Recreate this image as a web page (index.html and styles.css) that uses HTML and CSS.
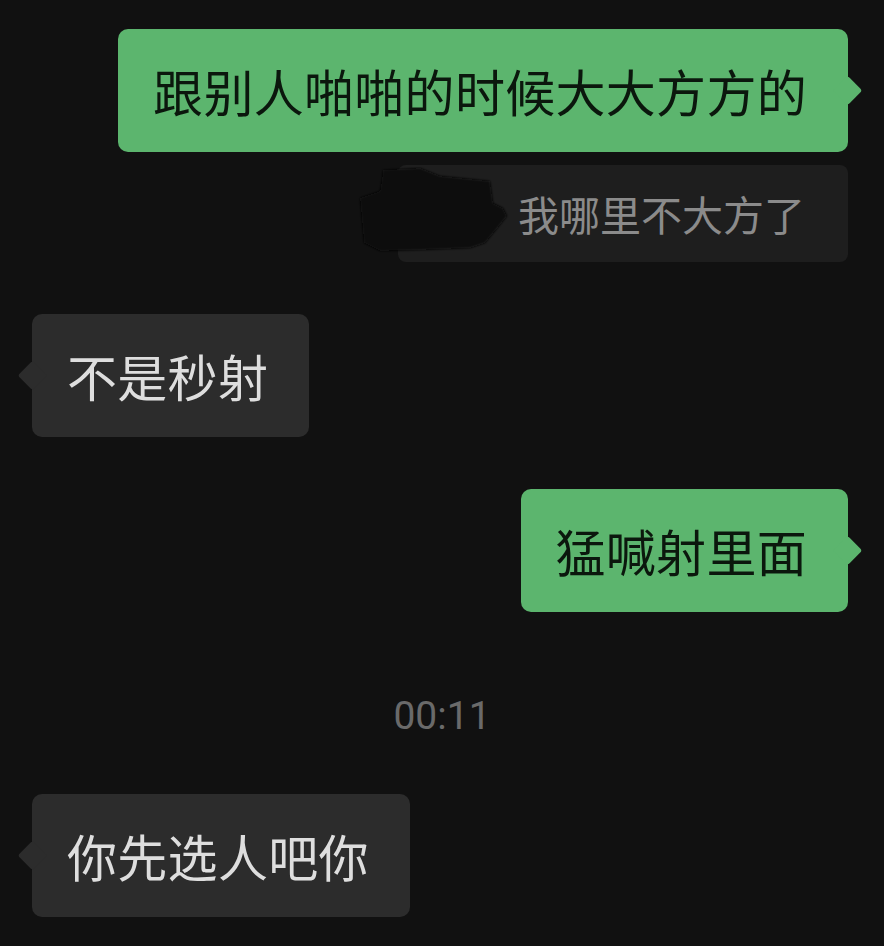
FILE: index.html
```html
<!DOCTYPE html>
<html lang="zh-CN">
<head>
    <meta charset="UTF-8">
    <meta name="viewport" content="width=device-width, initial-scale=1.0">
    <title>聊天记录</title>
    <link rel="stylesheet" href="styles.css">
</head>
<body>
    <div class="chat">
        <div class="row right">
            <div class="bubble mine">跟别人啪啪的时候大大方方的</div>
        </div>
        <div class="row right quote-row">
            <div class="quote">
                我哪里不大方了
                <!-- name covered by a scribble -->
                <svg class="scribble" width="160" height="100" viewBox="0 0 160 100">
                    <defs>
                        <filter id="soft"><feGaussianBlur stdDeviation="1.2"/></filter>
                    </defs>
                    <polygon filter="url(#soft)" fill="#090909"
                        points="25,3 62,1 82,9 132,14 135,36 145,41 149,49 137,64 127,76 112,81 62,83 22,84 6,76 2,31 22,24 24,12"/>
                </svg>
            </div>
        </div>
        <div class="row left">
            <div class="bubble theirs">不是秒射</div>
        </div>
        <div class="row right">
            <div class="bubble mine">猛喊射里面</div>
        </div>
        <div class="time">00:11</div>
        <div class="row left">
            <div class="bubble theirs">你先选人吧你</div>
        </div>
    </div>
</body>
</html>
```

FILE: styles.css
```css
body {
    margin: 0;
    background-color: #111111;
    font-family: "Noto Sans CJK SC", "Noto Sans", sans-serif;
}
.chat {
    display: flex;
    flex-direction: column;
    padding: 29px 36px 30px 32px;
}
.row {
    display: flex;
}
.row.right {
    justify-content: flex-end;
}
.row.left {
    justify-content: flex-start;
}
.row + .row {
    margin-top: 52px;
}
.row + .row.quote-row {
    margin-top: 13px;
}
.bubble {
    position: relative;
    padding: 26px 41px 26px 35px;
    font-size: 50px;
    line-height: 71px;
    letter-spacing: 0.3px;
    border-radius: 10px;
    white-space: nowrap;
}
.bubble::before {
    content: "";
    position: absolute;
    top: 50%;
    width: 21px;
    height: 21px;
    margin-top: -11px;
    border-radius: 3px;
    transform: rotate(45deg);
}
.mine {
    background-color: #5cb56e;
    color: #0b170d;
}
.mine::before {
    right: -10px;
    background-color: #5cb56e;
}
.theirs {
    background-color: #2c2c2c;
    color: #dedede;
}
.theirs::before {
    left: -10px;
    background-color: #2c2c2c;
}
.quote {
    position: relative;
    padding: 0 43px 0 120px;
    height: 97px;
    line-height: 97px;
    font-size: 41px;
    color: #8b8b8b;
    background-color: #1e1e1e;
    border-radius: 8px;
    white-space: nowrap;
}
.scribble {
    position: absolute;
    left: -40px;
    top: 2px;
}
.time {
    margin: 79px 0 53px;
    text-align: center;
    font-family: Roboto, "Noto Sans", sans-serif;
    font-size: 39px;
    line-height: 50px;
    color: #6a6a6a;
    padding-left: 4px;
}
```
